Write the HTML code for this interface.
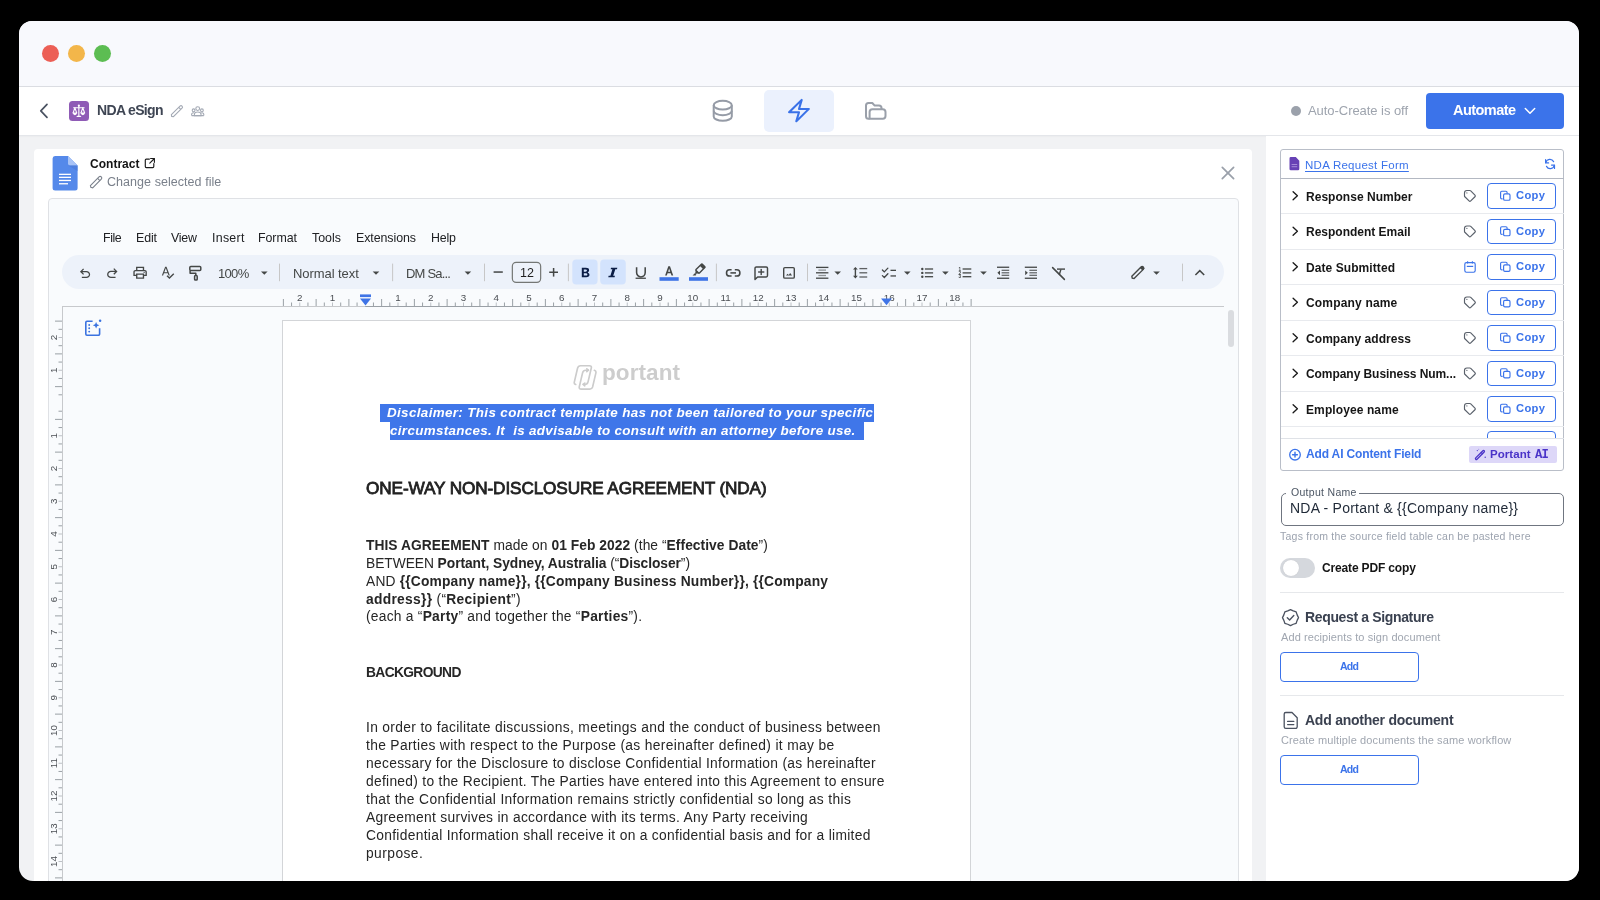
<!DOCTYPE html>
<html><head><meta charset="utf-8"><title>NDA eSign</title>
<style>
html,body{margin:0;padding:0;}
body{width:1600px;height:900px;background:#000;overflow:hidden;position:relative;font-family:"Liberation Sans",sans-serif;}
#win{position:absolute;left:19px;top:21px;width:1560px;height:860px;border-radius:13px 13px 14px 14px;overflow:hidden;background:#f1f2f4;}
#in{position:absolute;left:-19px;top:-21px;width:1600px;height:900px;}
.a{position:absolute;box-sizing:border-box;}
.t{position:absolute;white-space:pre;line-height:1;-webkit-font-smoothing:antialiased;will-change:transform;}
.t b{font-weight:700;}
svg.a{overflow:visible;}
</style></head>
<body>
<div id="win"><div id="in">
<!-- title bar -->
<div class="a" style="left:0;top:0;width:1600px;height:86px;background:#f8f9fd;"></div>
<div class="a" style="left:0;top:86px;width:1600px;height:1px;background:#dcdee3;"></div>
<div class="a" style="left:42px;top:45px;width:17px;height:17px;border-radius:50%;background:#ec5f56;"></div>
<div class="a" style="left:68px;top:45px;width:17px;height:17px;border-radius:50%;background:#f3b64a;"></div>
<div class="a" style="left:94px;top:45px;width:17px;height:17px;border-radius:50%;background:#5cbd52;"></div>
<!-- header -->
<div class="a" style="left:0;top:87px;width:1600px;height:48px;background:#fff;box-shadow:0 1px 2px rgba(0,0,0,0.07);"></div>
<div class="a" style="left:0;top:135px;width:1600px;height:1px;background:#e4e6ea;"></div>
<div class="a" style="left:764px;top:90px;width:70px;height:42px;border-radius:5px;background:#ebf1fd;"></div>
<div class="a" style="left:68.6px;top:100.7px;width:20.5px;height:20.6px;border-radius:3.5px;background:#8f5bb6;"></div>
<div class="a" style="left:1291px;top:106px;width:10px;height:10px;border-radius:50%;background:#9ba1ab;"></div>
<div class="a" style="left:1426px;top:93px;width:138px;height:36px;border-radius:4px;background:#3b73ea;"></div>
<!-- left card -->
<div class="a" style="left:34px;top:149px;width:1218px;height:760px;border-radius:4px;background:#fff;"></div>
<!-- docs frame -->
<div class="a" style="left:48px;top:198px;width:1191px;height:760px;border-radius:4px;border:1px solid #dfe1e5;background:#f9fbfd;"></div>
<div class="a" style="left:62px;top:255px;width:1162px;height:34px;border-radius:17px;background:#edf2fa;"></div>
<div class="a" style="left:62px;top:306px;width:1162px;height:1px;background:#c7c9cc;"></div>
<div class="a" style="left:62px;top:306px;width:1px;height:600px;background:#c7c9cc;"></div>
<!-- page -->
<div class="a" style="left:282px;top:320px;width:689px;height:600px;background:#fff;border:1px solid #d3d5d8;"></div>
<div class="a" style="left:1227.5px;top:310px;width:6.5px;height:37px;border-radius:3.5px;background:#dadce0;"></div>
<!-- selection highlight -->
<div class="a" style="left:379.5px;top:403.6px;width:494.5px;height:18px;background:#3f76e9;"></div>
<div class="a" style="left:389.5px;top:421.5px;width:474.5px;height:18.2px;background:#3f76e9;"></div>
<!-- right panel -->
<div class="a" style="left:1266px;top:136px;width:313px;height:760px;background:#fff;"></div>
<div class="a" style="left:1280px;top:149px;width:284px;height:322px;border:1px solid #b9bec8;border-radius:3px;"></div>
<div class="a" style="left:1281px;top:178px;width:282.5px;height:1px;background:#b3b8c2;"></div>
<div class="a" style="left:1281px;top:213px;width:282.5px;height:1px;background:#e8eaee;"></div>
<div class="a" style="left:1281px;top:248.5px;width:282.5px;height:1px;background:#e8eaee;"></div>
<div class="a" style="left:1281px;top:284px;width:282.5px;height:1px;background:#e8eaee;"></div>
<div class="a" style="left:1281px;top:319.5px;width:282.5px;height:1px;background:#e8eaee;"></div>
<div class="a" style="left:1281px;top:355px;width:282.5px;height:1px;background:#e8eaee;"></div>
<div class="a" style="left:1281px;top:390.5px;width:282.5px;height:1px;background:#e8eaee;"></div>
<div class="a" style="left:1281px;top:426px;width:282.5px;height:1px;background:#e8eaee;"></div>
<div class="a" style="left:1281px;top:438px;width:282.5px;height:1px;background:#dfe2e7;"></div>
<div class="a" style="left:1487px;top:431px;width:69px;height:7px;overflow:hidden;"><div class="a" style="left:0;top:0;width:69px;height:25px;border:1.5px solid #3b73ea;border-radius:4px;"></div></div>
<div class="a" style="left:1469px;top:446px;width:87.5px;height:17px;border-radius:2px;background:#ddd7f8;"></div>
<!-- output name field -->
<div class="a" style="left:1280.5px;top:493px;width:283px;height:33px;border:1.5px solid #6f7580;border-radius:5px;"></div>
<div class="a" style="left:1286px;top:486px;width:73px;height:10px;background:#fff;"></div>
<!-- toggle -->
<div class="a" style="left:1280px;top:558px;width:34.5px;height:20px;border-radius:10px;background:#d5d8dd;"></div>
<div class="a" style="left:1282.5px;top:560px;width:16px;height:16px;border-radius:50%;background:#fff;box-shadow:0 0 1px rgba(0,0,0,0.15);"></div>
<div class="a" style="left:1280px;top:592px;width:284px;height:1px;background:#e6e8eb;"></div>
<div class="a" style="left:1280px;top:652px;width:139px;height:29.5px;border:1.5px solid #3b73ea;border-radius:4px;"></div>
<div class="a" style="left:1280px;top:695px;width:284px;height:1px;background:#e6e8eb;"></div>
<div class="a" style="left:1280px;top:755px;width:139px;height:29.5px;border:1.5px solid #3b73ea;border-radius:4px;"></div>
<div class="a" style="left:1487px;top:183.3px;width:69px;height:25.4px;border:1.5px solid #3b73ea;border-radius:4px;"></div>
<div class="a" style="left:1487px;top:218.8px;width:69px;height:25.4px;border:1.5px solid #3b73ea;border-radius:4px;"></div>
<div class="a" style="left:1487px;top:254.3px;width:69px;height:25.4px;border:1.5px solid #3b73ea;border-radius:4px;"></div>
<div class="a" style="left:1487px;top:289.8px;width:69px;height:25.4px;border:1.5px solid #3b73ea;border-radius:4px;"></div>
<div class="a" style="left:1487px;top:325.3px;width:69px;height:25.4px;border:1.5px solid #3b73ea;border-radius:4px;"></div>
<div class="a" style="left:1487px;top:360.8px;width:69px;height:25.4px;border:1.5px solid #3b73ea;border-radius:4px;"></div>
<div class="a" style="left:1487px;top:396.3px;width:69px;height:25.4px;border:1.5px solid #3b73ea;border-radius:4px;"></div>
<svg class="a" style="left:0;top:0;will-change:transform" width="1600" height="900" viewBox="0 0 1600 900">
<polyline points="47,104.3 40.8,110.8 47,117.3" fill="none" stroke="#4a5261" stroke-width="1.7" stroke-linecap="round" stroke-linejoin="round"/>
<g fill="none" stroke="#fff" stroke-width="1.15" stroke-linecap="round"><line x1="78.85" y1="106" x2="78.85" y2="116.2"/><line x1="73.6" y1="107.7" x2="84.1" y2="107.7"/><path d="M74.9 107.9 L73.1 112.9 M74.9 107.9 L76.7 112.9"/><path d="M82.8 107.9 L81 112.9 M82.8 107.9 L84.6 112.9"/></g><g fill="#fff"><path d="M72.6 112.6 H77.2 Q76.6 115.2 74.9 115.2 Q73.2 115.2 72.6 112.6 Z"/><path d="M80.5 112.6 H85.1 Q84.5 115.2 82.8 115.2 Q81.1 115.2 80.5 112.6 Z"/><path d="M76.3 117 H81.4 L80.6 115.8 H77.1 Z"/><circle cx="78.85" cy="105.6" r="1.1"/></g>
<g transform="translate(177.2,110.9) rotate(-45)" fill="none" stroke="#a3a9b4" stroke-width="1.1"><path d="M-6.8 -1.45 H5.4 A1.45 1.45 0 0 1 5.4 1.45 H-6.8 L-7.8 0 Z"/><line x1="3.6" y1="-1.45" x2="3.6" y2="1.45"/></g>
<g fill="none" stroke="#a3a9b4" stroke-width="1.1"><circle cx="197.7" cy="108.6" r="1.9"/><circle cx="193.6" cy="110.3" r="1.4"/><circle cx="201.9" cy="110.3" r="1.4"/><path d="M194.4 115.6 v-1 a3.3 2.6 0 0 1 6.6 0 v1 z"/><path d="M191.6 115.6 v-1.2 a1.8 1.6 0 0 1 2.8 -1.3 M203.8 115.6 v-1.2 a1.8 1.6 0 0 0 -2.8 -1.3 M191.6 115.6 h12.2"/></g>
<g fill="none" stroke="#959ba6" stroke-width="2"><ellipse cx="722.75" cy="105.15" rx="9.05" ry="4.35"/><path d="M713.7 105.15 V116.45 A9.05 4.35 0 0 0 731.8 116.45 V105.15"/><path d="M713.7 110.85 A9.05 4.35 0 0 0 731.8 110.85"/></g>
<g transform="translate(784.6,97.4) scale(1.2,1.1)" fill="none" stroke="#3a72e8" stroke-width="1.75" stroke-linejoin="round" stroke-linecap="round"><path d="m3.75 13.5 10.5-11.25L12 10.5h8.25L9.75 21.75 12 13.5H3.75Z"/></g>
<g transform="translate(855,95)" fill="none" stroke="#9aa0aa" stroke-width="2" stroke-linejoin="round"><path d="M14.6 23.7 H13.5 a2.5 2.5 0 0 1 -2.5 -2.5 V10.5 a2.5 2.5 0 0 1 2.5 -2.5 H17.3 l2.4 2.6 H24 a2.5 2.5 0 0 1 2.5 2.5 V14.2"/><path d="M14.6 23.7 V17 a2.8 2.8 0 0 1 2.8 -2.8 H27.7 a2.8 2.8 0 0 1 2.8 2.8 V21 a2.7 2.7 0 0 1 -2.7 2.7 Z"/></g>
<polyline points="1525.3,108.5 1530,113.2 1534.7,108.5" fill="none" stroke="#fff" stroke-width="1.5" stroke-linecap="round" stroke-linejoin="round"/>
<path d="M55 156 H68 L77.6 165.6 V188.1 A2.5 2.5 0 0 1 75.1 190.6 H55.1 A2.5 2.5 0 0 1 52.6 188.1 V158.5 A2.5 2.5 0 0 1 55 156 Z" fill="#5589ea"/><path d="M68 156 L77.6 165.6 H70 A2 2 0 0 1 68 163.6 Z" fill="#a8c3f6"/><path d="M68.3 165.6 H77.6 V171 Z" fill="#4a78d6" opacity="0.6"/><g fill="#fff"><rect x="59" y="173.7" width="12" height="1.3"/><rect x="59" y="176.7" width="12" height="1.3"/><rect x="59" y="179.8" width="12" height="1.3"/><rect x="59" y="183.1" width="9" height="1.3"/></g>
<g fill="none" stroke="#1c1c1c" stroke-width="1.15" stroke-linecap="round" stroke-linejoin="round"><path d="M149.4 159.1 H146.3 A1 1 0 0 0 145.3 160.1 V166.6 A1 1 0 0 0 146.3 167.6 H152.8 A1 1 0 0 0 153.8 166.6 V163.6"/><path d="M150.6 158.5 H154.4 V162.3 M154.4 158.5 L149.8 163.1"/></g>
<g transform="translate(96.2,182) rotate(-45)" fill="none" stroke="#7a808b" stroke-width="1.1"><path d="M-6.6 -1.6 H5.6 A1.6 1.6 0 0 1 5.6 1.6 H-6.6 L-7.6 0 Z"/><line x1="3.6" y1="-1.6" x2="3.6" y2="1.6"/></g>
<g stroke="#9aa0aa" stroke-width="1.7" stroke-linecap="round"><line x1="1222.3" y1="167.4" x2="1233.6" y2="178.7"/><line x1="1233.6" y1="167.4" x2="1222.3" y2="178.7"/></g>
<g transform="translate(77.4,281.2) scale(0.01594)" fill="#444746"><path d="M280-200v-80h284q63 0 109.5-40T720-420q0-60-46.5-100T564-560H312l104 104-56 56-200-200 200-200 56 56-104 104h252q97 0 166.5 63T800-420q0 94-69.5 157T564-200H280Z"/></g>
<g transform="translate(104.5,281.20000000000005) scale(0.01625)" fill="#444746"><path d="M396-200q-97 0-166.5-63T160-420q0-94 69.5-157T396-640h252L544-744l56-56 200 200-200 200-56-56 104-104H396q-63 0-109.5 40T240-420q0 60 46.5 100T396-280h284v80H396Z"/></g>
<g transform="translate(132.0,280.8) scale(0.01687)" fill="#444746"><path d="M640-640v-120H320v120h-80v-200h480v200h-80Zm-480 80h640-640Zm560 100q17 0 28.5-11.5T760-500q0-17-11.5-28.5T720-540q-17 0-28.5 11.5T680-500q0 17 11.5 28.5T720-460Zm-80 260v-160H320v160h320Zm80 80H240v-160H80v-240q0-51 35-85.5t85-34.5h560q51 0 85.5 34.5T880-520v240H720v160Zm80-240v-160q0-17-11.5-28.5T760-560H200q-17 0-28.5 11.5T160-520v160h80v-80h480v80h80Z"/></g>
<g transform="translate(159.8,280.4) scale(0.01708)" fill="#444746"><path d="M564-80 394-250l56-56 114 114 226-226 56 56L564-80ZM120-280l194-520h79l194 520h-75l-46-132H242l-47 132h-75Zm145-195h174l-84-240h-6l-84 240Z"/></g>
<g fill="none" stroke="#444746" stroke-width="1.5" stroke-linejoin="round"><rect x="189.8" y="266.6" width="11" height="3.9" rx="1"/><path d="M190.1 270.5 V273.2 H195.8 V275.6"/><rect x="194.6" y="275.6" width="2.6" height="4.5" rx="0.8"/></g>
<path d="M261 271.4 h6.6 l-3.3 3.4 z" fill="#444746"/>
<path d="M372.7 271.4 h6.6 l-3.3 3.4 z" fill="#444746"/>
<path d="M464.6 271.4 h6.6 l-3.3 3.4 z" fill="#444746"/>
<path d="M834.4 271.4 h6.6 l-3.3 3.4 z" fill="#444746"/>
<path d="M904.0 271.4 h6.6 l-3.3 3.4 z" fill="#444746"/>
<path d="M942.1 271.4 h6.6 l-3.3 3.4 z" fill="#444746"/>
<path d="M980.2 271.4 h6.6 l-3.3 3.4 z" fill="#444746"/>
<path d="M1153.2 271.4 h6.6 l-3.3 3.4 z" fill="#444746"/>
<rect x="279.0" y="263.6" width="1" height="17.6" fill="#c7c7c7"/>
<rect x="392.1" y="263.6" width="1" height="17.6" fill="#c7c7c7"/>
<rect x="484.0" y="263.6" width="1" height="17.6" fill="#c7c7c7"/>
<rect x="567.9" y="263.6" width="1" height="17.6" fill="#c7c7c7"/>
<rect x="715.9" y="263.6" width="1" height="17.6" fill="#c7c7c7"/>
<rect x="807.0" y="263.6" width="1" height="17.6" fill="#c7c7c7"/>
<rect x="1182.0" y="263.6" width="1" height="17.6" fill="#c7c7c7"/>
<rect x="493.6" y="271.3" width="9.2" height="1.5" fill="#444746"/>
<rect x="512.35" y="262.35" width="28.3" height="20" rx="3.8" fill="none" stroke="#747775" stroke-width="1.2"/>
<rect x="549.2" y="271.5" width="8.8" height="1.5" fill="#444746"/><rect x="552.85" y="268" width="1.5" height="8.6" fill="#444746"/>
<rect x="572.3" y="259.4" width="25.3" height="25.1" rx="4" fill="#d3e3fd"/><rect x="600.2" y="259.4" width="25.6" height="25.1" rx="4" fill="#d3e3fd"/>
<path d="M581.8 267.8 H585.9 Q589.1 267.8 589.1 270.2 Q589.1 271.8 587.7 272.4 Q589.5 273 589.5 274.8 Q589.5 277.2 586.2 277.2 H581.8 Z M583.8 269.4 V271.7 H585.6 Q587 271.7 587 270.55 Q587 269.4 585.6 269.4 Z M583.8 273.2 V275.6 H585.9 Q587.4 275.6 587.4 274.4 Q587.4 273.2 585.9 273.2 Z" fill="#0b1d46" fill-rule="evenodd"/>
<path d="M611 267.8 H617.3 L617 269.3 H615.3 L613.2 275.7 H614.9 L614.6 277.2 H608.3 L608.6 275.7 H610.4 L612.4 269.3 H610.7 Z" fill="#0b1d46"/>
<path d="M636.6 267.2 V272.6 A4.3 4.3 0 0 0 645.2 272.6 V267.2" fill="none" stroke="#444746" stroke-width="1.55"/><rect x="635.6" y="277.6" width="10.3" height="1.3" fill="#444746"/>
<path d="M665.1 275.6 L668.3 266.2 H670 L673.2 275.6 H671.5 L670.7 273.2 H667.6 L666.8 275.6 Z M668.1 271.7 H670.2 L669.15 268.5 Z" fill="#444746" fill-rule="evenodd"/>
<rect x="659.5" y="277.2" width="19.2" height="3.6" fill="#3f74e6"/>
<g transform="translate(699,270) rotate(45)"><rect x="-2.4" y="-6.4" width="4.8" height="8.8" rx="0.6" fill="none" stroke="#444746" stroke-width="1.4"/><rect x="-2.4" y="-6.8" width="4.8" height="3.2" fill="#444746"/><path d="M-2.2 2.4 h4.4 l-2.2 3.2 z" fill="#444746"/></g><path d="M692.6 275.6 l2.2 -2.4 l1.6 1.6 l-0.8 0.8 z" fill="#444746"/>
<rect x="689" y="277.2" width="19" height="3.6" fill="#3f74e6"/>
<g fill="none" stroke="#444746" stroke-width="1.55"><path d="M731.6 269.8 H729.6 A3.1 3.1 0 0 0 729.6 276 H731.6"/><path d="M734.8 269.8 H736.8 A3.1 3.1 0 0 1 736.8 276 H734.8"/><line x1="730.4" y1="272.9" x2="736" y2="272.9"/></g>
<path d="M755 279.4 V268.2 A1.3 1.3 0 0 1 756.3 266.9 H766.2 A1.3 1.3 0 0 1 767.5 268.2 V275.6 A1.3 1.3 0 0 1 766.2 276.9 H757.6 Z" fill="none" stroke="#444746" stroke-width="1.45" stroke-linejoin="round"/><rect x="760.5" y="268.9" width="1.4" height="6.2" fill="#444746"/><rect x="758.1" y="271.3" width="6.2" height="1.4" fill="#444746"/>
<rect x="783.7" y="267.6" width="10.6" height="10.5" rx="1.2" fill="none" stroke="#444746" stroke-width="1.4"/><path d="M786 275.6 l1.6 -1.8 l1.1 1.1 l1.5 -2 l1.9 2.7 z" fill="#444746"/>
<rect x="816" y="266.75" width="12.399999999999977" height="1.3" fill="#444746" opacity="1"/>
<rect x="818.4" y="269.45000000000005" width="7.600000000000023" height="1.3" fill="#444746" opacity="0.55"/>
<rect x="816" y="272.15000000000003" width="12.399999999999977" height="1.3" fill="#444746" opacity="1"/>
<rect x="818.4" y="274.85" width="7.600000000000023" height="1.3" fill="#444746" opacity="0.55"/>
<rect x="816" y="277.55" width="12.399999999999977" height="1.3" fill="#444746" opacity="1"/>
<path d="M855.4 267 l-2.4 2.6 h1.7 v6.2 h-1.7 l2.4 2.6 l2.4 -2.6 h-1.7 v-6.2 h1.7 z" fill="#444746"/>
<rect x="859.4" y="267.95000000000005" width="7.8" height="1.3" fill="#444746" opacity="0.85"/>
<rect x="859.4" y="272.15000000000003" width="7.8" height="1.3" fill="#444746" opacity="0.85"/>
<rect x="859.4" y="276.35" width="7.8" height="1.3" fill="#444746" opacity="0.85"/>
<g fill="none" stroke="#444746" stroke-width="1.3" stroke-linecap="round"><path d="M882.4 270 l1.9 1.9 l3.6 -3.8"/><path d="M882.4 275.6 l1.9 1.9 l3.6 -3.8"/></g><rect x="890.5" y="269.7" width="5.5" height="1.3" fill="#444746"/><rect x="890.5" y="275.3" width="5.5" height="1.3" fill="#444746"/>
<circle cx="922.3" cy="269.0" r="1.2" fill="#444746"/><rect x="924.9" y="268.35" width="8.2" height="1.3" fill="#444746"/>
<circle cx="922.3" cy="272.9" r="1.2" fill="#444746"/><rect x="924.9" y="272.25" width="8.2" height="1.3" fill="#444746"/>
<circle cx="922.3" cy="276.7" r="1.2" fill="#444746"/><rect x="924.9" y="276.05" width="8.2" height="1.3" fill="#444746"/>
<rect x="962.6" y="268.35" width="8.7" height="1.3" fill="#444746"/>
<rect x="962.6" y="272.25" width="8.7" height="1.3" fill="#444746"/>
<rect x="962.6" y="276.05" width="8.7" height="1.3" fill="#444746"/>
<g font-family="Liberation Sans" font-weight="700" font-size="4.6" fill="#444746"><text x="958.6" y="270.8">1</text><text x="958.5" y="274.6">2</text><text x="958.5" y="278.4">3</text></g>
<rect x="997" y="266.6" width="12.2" height="1.3" fill="#444746"/><rect x="997" y="277.6" width="12.2" height="1.3" fill="#444746"/>
<rect x="1001.6" y="269.7" width="7.6" height="1.2" fill="#444746" opacity="0.85"/>
<rect x="1001.6" y="272.2" width="7.6" height="1.2" fill="#444746" opacity="0.85"/>
<rect x="1001.6" y="274.7" width="7.6" height="1.2" fill="#444746" opacity="0.85"/>
<path d="M1000 270.4 v4.8 l-2.6 -2.4 z" fill="#444746"/>
<rect x="1024.8" y="266.6" width="12.2" height="1.3" fill="#444746"/><rect x="1024.8" y="277.6" width="12.2" height="1.3" fill="#444746"/>
<rect x="1029.3999999999999" y="269.7" width="7.6" height="1.2" fill="#444746" opacity="0.85"/>
<rect x="1029.3999999999999" y="272.2" width="7.6" height="1.2" fill="#444746" opacity="0.85"/>
<rect x="1029.3999999999999" y="274.7" width="7.6" height="1.2" fill="#444746" opacity="0.85"/>
<path d="M1025.2 270.4 v4.8 l2.6 -2.4 z" fill="#444746"/>
<g stroke="#444746" stroke-width="1.5" stroke-linecap="round"><line x1="1052.6" y1="267.6" x2="1064.4" y2="279.4"/></g><rect x="1057" y="268.4" width="8" height="1.4" fill="#444746"/><path d="M1060.2 269.6 l-1.6 4.6 l1.2 1.2 l1.8 -5.8 z" fill="#444746"/>
<g transform="translate(1138.2,272.2) rotate(-45)"><path d="M-7.4 -1.6 H5.6 A1.6 1.6 0 0 1 5.6 1.6 H-7.4 L-8.4 0 Z" fill="none" stroke="#444746" stroke-width="1.4"/><rect x="4.2" y="-1.9" width="2.8" height="3.8" fill="#444746"/></g>
<polyline points="1195.4,275 1199.8,270.6 1204.2,275" fill="none" stroke="#444746" stroke-width="1.5"/>
<g fill="none" stroke="#3b73e0" stroke-width="1.6"><path d="M92.6 321.3 H87 A1.2 1.2 0 0 0 85.8 322.5 V334.1 A1.2 1.2 0 0 0 87 335.3 H98.4 A1.2 1.2 0 0 0 99.6 334.1 V328.3"/></g><g fill="#3b73e0"><circle cx="89.2" cy="325.0" r="0.95"/><circle cx="89.2" cy="328.3" r="0.95"/><circle cx="89.2" cy="331.6" r="0.95"/><path d="M96.1 321.9 l1.0 2.3 l2.3 1.0 l-2.3 1.0 l-1.0 2.3 l-1.0 -2.3 l-2.3 -1.0 l2.3 -1.0 z"/><circle cx="100.1" cy="320.7" r="1.25"/></g>
</svg><svg class="a" style="left:0;top:0;will-change:transform" width="1600" height="900" viewBox="0 0 1600 900">
<rect x="282.88" y="299" width="1" height="7" fill="#9aa0a6"/><rect x="291.06" y="302.5" width="1" height="3.5" fill="#9aa0a6"/><rect x="299.25" y="302.5" width="1" height="3.5" fill="#bdc1c6"/><rect x="307.44" y="302.5" width="1" height="3.5" fill="#9aa0a6"/><rect x="315.62" y="299" width="1" height="7" fill="#9aa0a6"/><rect x="323.81" y="302.5" width="1" height="3.5" fill="#9aa0a6"/><rect x="332.00" y="302.5" width="1" height="3.5" fill="#bdc1c6"/><rect x="340.19" y="302.5" width="1" height="3.5" fill="#9aa0a6"/><rect x="348.38" y="299" width="1" height="7" fill="#9aa0a6"/><rect x="356.56" y="302.5" width="1" height="3.5" fill="#9aa0a6"/><rect x="372.94" y="302.5" width="1" height="3.5" fill="#9aa0a6"/><rect x="381.12" y="299" width="1" height="7" fill="#9aa0a6"/><rect x="389.31" y="302.5" width="1" height="3.5" fill="#9aa0a6"/><rect x="397.50" y="302.5" width="1" height="3.5" fill="#bdc1c6"/><rect x="405.69" y="302.5" width="1" height="3.5" fill="#9aa0a6"/><rect x="413.88" y="299" width="1" height="7" fill="#9aa0a6"/><rect x="422.06" y="302.5" width="1" height="3.5" fill="#9aa0a6"/><rect x="430.25" y="302.5" width="1" height="3.5" fill="#bdc1c6"/><rect x="438.44" y="302.5" width="1" height="3.5" fill="#9aa0a6"/><rect x="446.62" y="299" width="1" height="7" fill="#9aa0a6"/><rect x="454.81" y="302.5" width="1" height="3.5" fill="#9aa0a6"/><rect x="463.00" y="302.5" width="1" height="3.5" fill="#bdc1c6"/><rect x="471.19" y="302.5" width="1" height="3.5" fill="#9aa0a6"/><rect x="479.38" y="299" width="1" height="7" fill="#9aa0a6"/><rect x="487.56" y="302.5" width="1" height="3.5" fill="#9aa0a6"/><rect x="495.75" y="302.5" width="1" height="3.5" fill="#bdc1c6"/><rect x="503.94" y="302.5" width="1" height="3.5" fill="#9aa0a6"/><rect x="512.12" y="299" width="1" height="7" fill="#9aa0a6"/><rect x="520.31" y="302.5" width="1" height="3.5" fill="#9aa0a6"/><rect x="528.50" y="302.5" width="1" height="3.5" fill="#bdc1c6"/><rect x="536.69" y="302.5" width="1" height="3.5" fill="#9aa0a6"/><rect x="544.88" y="299" width="1" height="7" fill="#9aa0a6"/><rect x="553.06" y="302.5" width="1" height="3.5" fill="#9aa0a6"/><rect x="561.25" y="302.5" width="1" height="3.5" fill="#bdc1c6"/><rect x="569.44" y="302.5" width="1" height="3.5" fill="#9aa0a6"/><rect x="577.62" y="299" width="1" height="7" fill="#9aa0a6"/><rect x="585.81" y="302.5" width="1" height="3.5" fill="#9aa0a6"/><rect x="594.00" y="302.5" width="1" height="3.5" fill="#bdc1c6"/><rect x="602.19" y="302.5" width="1" height="3.5" fill="#9aa0a6"/><rect x="610.38" y="299" width="1" height="7" fill="#9aa0a6"/><rect x="618.56" y="302.5" width="1" height="3.5" fill="#9aa0a6"/><rect x="626.75" y="302.5" width="1" height="3.5" fill="#bdc1c6"/><rect x="634.94" y="302.5" width="1" height="3.5" fill="#9aa0a6"/><rect x="643.12" y="299" width="1" height="7" fill="#9aa0a6"/><rect x="651.31" y="302.5" width="1" height="3.5" fill="#9aa0a6"/><rect x="659.50" y="302.5" width="1" height="3.5" fill="#bdc1c6"/><rect x="667.69" y="302.5" width="1" height="3.5" fill="#9aa0a6"/><rect x="675.88" y="299" width="1" height="7" fill="#9aa0a6"/><rect x="684.06" y="302.5" width="1" height="3.5" fill="#9aa0a6"/><rect x="692.25" y="302.5" width="1" height="3.5" fill="#bdc1c6"/><rect x="700.44" y="302.5" width="1" height="3.5" fill="#9aa0a6"/><rect x="708.62" y="299" width="1" height="7" fill="#9aa0a6"/><rect x="716.81" y="302.5" width="1" height="3.5" fill="#9aa0a6"/><rect x="725.00" y="302.5" width="1" height="3.5" fill="#bdc1c6"/><rect x="733.19" y="302.5" width="1" height="3.5" fill="#9aa0a6"/><rect x="741.38" y="299" width="1" height="7" fill="#9aa0a6"/><rect x="749.56" y="302.5" width="1" height="3.5" fill="#9aa0a6"/><rect x="757.75" y="302.5" width="1" height="3.5" fill="#bdc1c6"/><rect x="765.94" y="302.5" width="1" height="3.5" fill="#9aa0a6"/><rect x="774.12" y="299" width="1" height="7" fill="#9aa0a6"/><rect x="782.31" y="302.5" width="1" height="3.5" fill="#9aa0a6"/><rect x="790.50" y="302.5" width="1" height="3.5" fill="#bdc1c6"/><rect x="798.69" y="302.5" width="1" height="3.5" fill="#9aa0a6"/><rect x="806.88" y="299" width="1" height="7" fill="#9aa0a6"/><rect x="815.06" y="302.5" width="1" height="3.5" fill="#9aa0a6"/><rect x="823.25" y="302.5" width="1" height="3.5" fill="#bdc1c6"/><rect x="831.44" y="302.5" width="1" height="3.5" fill="#9aa0a6"/><rect x="839.62" y="299" width="1" height="7" fill="#9aa0a6"/><rect x="847.81" y="302.5" width="1" height="3.5" fill="#9aa0a6"/><rect x="856.00" y="302.5" width="1" height="3.5" fill="#bdc1c6"/><rect x="864.19" y="302.5" width="1" height="3.5" fill="#9aa0a6"/><rect x="872.38" y="299" width="1" height="7" fill="#9aa0a6"/><rect x="880.56" y="302.5" width="1" height="3.5" fill="#9aa0a6"/><rect x="888.75" y="302.5" width="1" height="3.5" fill="#bdc1c6"/><rect x="896.94" y="302.5" width="1" height="3.5" fill="#9aa0a6"/><rect x="905.12" y="299" width="1" height="7" fill="#9aa0a6"/><rect x="913.31" y="302.5" width="1" height="3.5" fill="#9aa0a6"/><rect x="921.50" y="302.5" width="1" height="3.5" fill="#bdc1c6"/><rect x="929.69" y="302.5" width="1" height="3.5" fill="#9aa0a6"/><rect x="937.88" y="299" width="1" height="7" fill="#9aa0a6"/><rect x="946.06" y="302.5" width="1" height="3.5" fill="#9aa0a6"/><rect x="954.25" y="302.5" width="1" height="3.5" fill="#bdc1c6"/><rect x="962.44" y="302.5" width="1" height="3.5" fill="#9aa0a6"/><rect x="970.62" y="299" width="1" height="7" fill="#9aa0a6"/>
<text x="299.75" y="300.6" text-anchor="middle" font-family="Liberation Sans" font-size="9.8" fill="#4a4e53">2</text><text x="332.50" y="300.6" text-anchor="middle" font-family="Liberation Sans" font-size="9.8" fill="#4a4e53">1</text><text x="398.00" y="300.6" text-anchor="middle" font-family="Liberation Sans" font-size="9.8" fill="#4a4e53">1</text><text x="430.75" y="300.6" text-anchor="middle" font-family="Liberation Sans" font-size="9.8" fill="#4a4e53">2</text><text x="463.50" y="300.6" text-anchor="middle" font-family="Liberation Sans" font-size="9.8" fill="#4a4e53">3</text><text x="496.25" y="300.6" text-anchor="middle" font-family="Liberation Sans" font-size="9.8" fill="#4a4e53">4</text><text x="529.00" y="300.6" text-anchor="middle" font-family="Liberation Sans" font-size="9.8" fill="#4a4e53">5</text><text x="561.75" y="300.6" text-anchor="middle" font-family="Liberation Sans" font-size="9.8" fill="#4a4e53">6</text><text x="594.50" y="300.6" text-anchor="middle" font-family="Liberation Sans" font-size="9.8" fill="#4a4e53">7</text><text x="627.25" y="300.6" text-anchor="middle" font-family="Liberation Sans" font-size="9.8" fill="#4a4e53">8</text><text x="660.00" y="300.6" text-anchor="middle" font-family="Liberation Sans" font-size="9.8" fill="#4a4e53">9</text><text x="692.75" y="300.6" text-anchor="middle" font-family="Liberation Sans" font-size="9.8" fill="#4a4e53">10</text><text x="725.50" y="300.6" text-anchor="middle" font-family="Liberation Sans" font-size="9.8" fill="#4a4e53">11</text><text x="758.25" y="300.6" text-anchor="middle" font-family="Liberation Sans" font-size="9.8" fill="#4a4e53">12</text><text x="791.00" y="300.6" text-anchor="middle" font-family="Liberation Sans" font-size="9.8" fill="#4a4e53">13</text><text x="823.75" y="300.6" text-anchor="middle" font-family="Liberation Sans" font-size="9.8" fill="#4a4e53">14</text><text x="856.50" y="300.6" text-anchor="middle" font-family="Liberation Sans" font-size="9.8" fill="#4a4e53">15</text><text x="889.25" y="300.6" text-anchor="middle" font-family="Liberation Sans" font-size="9.8" fill="#4a4e53">16</text><text x="922.00" y="300.6" text-anchor="middle" font-family="Liberation Sans" font-size="9.8" fill="#4a4e53">17</text><text x="954.75" y="300.6" text-anchor="middle" font-family="Liberation Sans" font-size="9.8" fill="#4a4e53">18</text>
<rect x="365.25" y="306" width="521.25" height="1" fill="#9aa0a6"/>
<rect x="360" y="294.4" width="11" height="2.7" fill="#3f74e6"/><path d="M360 298.4 h11 l-5.5 7 z" fill="#3f74e6"/>
<path d="M881 298.6 h11 l-5.5 6.6 z" fill="#3f74e6"/>
<rect x="55" y="320.62" width="7" height="1" fill="#9aa0a6"/><rect x="58.5" y="328.81" width="3.5" height="1" fill="#9aa0a6"/><rect x="58.5" y="337.00" width="3.5" height="1" fill="#bdc1c6"/><rect x="58.5" y="345.19" width="3.5" height="1" fill="#9aa0a6"/><rect x="55" y="353.38" width="7" height="1" fill="#9aa0a6"/><rect x="58.5" y="361.56" width="3.5" height="1" fill="#9aa0a6"/><rect x="58.5" y="369.75" width="3.5" height="1" fill="#bdc1c6"/><rect x="58.5" y="377.94" width="3.5" height="1" fill="#9aa0a6"/><rect x="55" y="386.12" width="7" height="1" fill="#9aa0a6"/><rect x="58.5" y="394.31" width="3.5" height="1" fill="#9aa0a6"/><rect x="58.5" y="410.69" width="3.5" height="1" fill="#9aa0a6"/><rect x="55" y="418.88" width="7" height="1" fill="#9aa0a6"/><rect x="58.5" y="427.06" width="3.5" height="1" fill="#9aa0a6"/><rect x="58.5" y="435.25" width="3.5" height="1" fill="#bdc1c6"/><rect x="58.5" y="443.44" width="3.5" height="1" fill="#9aa0a6"/><rect x="55" y="451.62" width="7" height="1" fill="#9aa0a6"/><rect x="58.5" y="459.81" width="3.5" height="1" fill="#9aa0a6"/><rect x="58.5" y="468.00" width="3.5" height="1" fill="#bdc1c6"/><rect x="58.5" y="476.19" width="3.5" height="1" fill="#9aa0a6"/><rect x="55" y="484.38" width="7" height="1" fill="#9aa0a6"/><rect x="58.5" y="492.56" width="3.5" height="1" fill="#9aa0a6"/><rect x="58.5" y="500.75" width="3.5" height="1" fill="#bdc1c6"/><rect x="58.5" y="508.94" width="3.5" height="1" fill="#9aa0a6"/><rect x="55" y="517.12" width="7" height="1" fill="#9aa0a6"/><rect x="58.5" y="525.31" width="3.5" height="1" fill="#9aa0a6"/><rect x="58.5" y="533.50" width="3.5" height="1" fill="#bdc1c6"/><rect x="58.5" y="541.69" width="3.5" height="1" fill="#9aa0a6"/><rect x="55" y="549.88" width="7" height="1" fill="#9aa0a6"/><rect x="58.5" y="558.06" width="3.5" height="1" fill="#9aa0a6"/><rect x="58.5" y="566.25" width="3.5" height="1" fill="#bdc1c6"/><rect x="58.5" y="574.44" width="3.5" height="1" fill="#9aa0a6"/><rect x="55" y="582.62" width="7" height="1" fill="#9aa0a6"/><rect x="58.5" y="590.81" width="3.5" height="1" fill="#9aa0a6"/><rect x="58.5" y="599.00" width="3.5" height="1" fill="#bdc1c6"/><rect x="58.5" y="607.19" width="3.5" height="1" fill="#9aa0a6"/><rect x="55" y="615.38" width="7" height="1" fill="#9aa0a6"/><rect x="58.5" y="623.56" width="3.5" height="1" fill="#9aa0a6"/><rect x="58.5" y="631.75" width="3.5" height="1" fill="#bdc1c6"/><rect x="58.5" y="639.94" width="3.5" height="1" fill="#9aa0a6"/><rect x="55" y="648.12" width="7" height="1" fill="#9aa0a6"/><rect x="58.5" y="656.31" width="3.5" height="1" fill="#9aa0a6"/><rect x="58.5" y="664.50" width="3.5" height="1" fill="#bdc1c6"/><rect x="58.5" y="672.69" width="3.5" height="1" fill="#9aa0a6"/><rect x="55" y="680.88" width="7" height="1" fill="#9aa0a6"/><rect x="58.5" y="689.06" width="3.5" height="1" fill="#9aa0a6"/><rect x="58.5" y="697.25" width="3.5" height="1" fill="#bdc1c6"/><rect x="58.5" y="705.44" width="3.5" height="1" fill="#9aa0a6"/><rect x="55" y="713.62" width="7" height="1" fill="#9aa0a6"/><rect x="58.5" y="721.81" width="3.5" height="1" fill="#9aa0a6"/><rect x="58.5" y="730.00" width="3.5" height="1" fill="#bdc1c6"/><rect x="58.5" y="738.19" width="3.5" height="1" fill="#9aa0a6"/><rect x="55" y="746.38" width="7" height="1" fill="#9aa0a6"/><rect x="58.5" y="754.56" width="3.5" height="1" fill="#9aa0a6"/><rect x="58.5" y="762.75" width="3.5" height="1" fill="#bdc1c6"/><rect x="58.5" y="770.94" width="3.5" height="1" fill="#9aa0a6"/><rect x="55" y="779.12" width="7" height="1" fill="#9aa0a6"/><rect x="58.5" y="787.31" width="3.5" height="1" fill="#9aa0a6"/><rect x="58.5" y="795.50" width="3.5" height="1" fill="#bdc1c6"/><rect x="58.5" y="803.69" width="3.5" height="1" fill="#9aa0a6"/><rect x="55" y="811.88" width="7" height="1" fill="#9aa0a6"/><rect x="58.5" y="820.06" width="3.5" height="1" fill="#9aa0a6"/><rect x="58.5" y="828.25" width="3.5" height="1" fill="#bdc1c6"/><rect x="58.5" y="836.44" width="3.5" height="1" fill="#9aa0a6"/><rect x="55" y="844.62" width="7" height="1" fill="#9aa0a6"/><rect x="58.5" y="852.81" width="3.5" height="1" fill="#9aa0a6"/><rect x="58.5" y="861.00" width="3.5" height="1" fill="#bdc1c6"/><rect x="58.5" y="869.19" width="3.5" height="1" fill="#9aa0a6"/><rect x="55" y="877.38" width="7" height="1" fill="#9aa0a6"/><rect x="58.5" y="885.56" width="3.5" height="1" fill="#9aa0a6"/>
<text x="0" y="0" transform="translate(57.4,337.50) rotate(-90)" text-anchor="middle" font-family="Liberation Sans" font-size="9.8" fill="#4a4e53">2</text><text x="0" y="0" transform="translate(57.4,370.25) rotate(-90)" text-anchor="middle" font-family="Liberation Sans" font-size="9.8" fill="#4a4e53">1</text><text x="0" y="0" transform="translate(57.4,435.75) rotate(-90)" text-anchor="middle" font-family="Liberation Sans" font-size="9.8" fill="#4a4e53">1</text><text x="0" y="0" transform="translate(57.4,468.50) rotate(-90)" text-anchor="middle" font-family="Liberation Sans" font-size="9.8" fill="#4a4e53">2</text><text x="0" y="0" transform="translate(57.4,501.25) rotate(-90)" text-anchor="middle" font-family="Liberation Sans" font-size="9.8" fill="#4a4e53">3</text><text x="0" y="0" transform="translate(57.4,534.00) rotate(-90)" text-anchor="middle" font-family="Liberation Sans" font-size="9.8" fill="#4a4e53">4</text><text x="0" y="0" transform="translate(57.4,566.75) rotate(-90)" text-anchor="middle" font-family="Liberation Sans" font-size="9.8" fill="#4a4e53">5</text><text x="0" y="0" transform="translate(57.4,599.50) rotate(-90)" text-anchor="middle" font-family="Liberation Sans" font-size="9.8" fill="#4a4e53">6</text><text x="0" y="0" transform="translate(57.4,632.25) rotate(-90)" text-anchor="middle" font-family="Liberation Sans" font-size="9.8" fill="#4a4e53">7</text><text x="0" y="0" transform="translate(57.4,665.00) rotate(-90)" text-anchor="middle" font-family="Liberation Sans" font-size="9.8" fill="#4a4e53">8</text><text x="0" y="0" transform="translate(57.4,697.75) rotate(-90)" text-anchor="middle" font-family="Liberation Sans" font-size="9.8" fill="#4a4e53">9</text><text x="0" y="0" transform="translate(57.4,730.50) rotate(-90)" text-anchor="middle" font-family="Liberation Sans" font-size="9.8" fill="#4a4e53">10</text><text x="0" y="0" transform="translate(57.4,763.25) rotate(-90)" text-anchor="middle" font-family="Liberation Sans" font-size="9.8" fill="#4a4e53">11</text><text x="0" y="0" transform="translate(57.4,796.00) rotate(-90)" text-anchor="middle" font-family="Liberation Sans" font-size="9.8" fill="#4a4e53">12</text><text x="0" y="0" transform="translate(57.4,828.75) rotate(-90)" text-anchor="middle" font-family="Liberation Sans" font-size="9.8" fill="#4a4e53">13</text><text x="0" y="0" transform="translate(57.4,861.50) rotate(-90)" text-anchor="middle" font-family="Liberation Sans" font-size="9.8" fill="#4a4e53">14</text>
<g fill="none" stroke="#cccccc" stroke-width="1.65" stroke-linecap="round" stroke-linejoin="round"><path d="M575.7 384.5 Q573.9 384.1 574.3 382.2 L577.6 368 Q578.2 365.7 580.5 365.7 H589.4 Q591.8 365.7 591.3 368 L588.1 381.6 Q587.5 384.4 584.8 384.4 H583.2"/><path d="M584.8 383 L583.2 384.4 L584.8 385.8"/><path d="M594.4 370.3 Q596.3 370.9 595.9 372.8 L592.6 387 Q592 389.1 589.8 389.1 H581.2 Q578.8 389.1 579.3 386.8 L582.6 372.8 Q583.2 370.2 585.8 370.2 H588.4"/><path d="M586.8 368.8 L588.4 370.2 L586.8 371.6"/></g>
<path d="M1290.8 157.1 H1295.8 L1299.3 160.7 V168.9 A1.3 1.3 0 0 1 1298 170.2 H1290.8 A1.3 1.3 0 0 1 1289.5 168.9 V158.4 A1.3 1.3 0 0 1 1290.8 157.1 Z" fill="#6741b5"/><g fill="#a58ad8"><rect x="1291.6" y="164" width="5.6" height="1"/><rect x="1291.6" y="166.2" width="5.6" height="1"/></g>
<g fill="none" stroke="#3b73ea" stroke-width="1.2" stroke-linecap="round" stroke-linejoin="round"><path d="M1545.8 162.6 A4.2 4.2 0 0 1 1553.6 161.6"/><path d="M1554.3 165.4 A4.2 4.2 0 0 1 1546.5 166.4"/><path d="M1545.6 159.6 V162.9 H1548.6"/><path d="M1554.5 168.4 V165.1 H1551.5"/></g>
<polyline points="1293.1,191.8 1297.4,195.8 1293.1,199.8" fill="none" stroke="#1a1a1a" stroke-width="1.35" stroke-linecap="round" stroke-linejoin="round"/>
<g fill="none" stroke="#3b73ea" stroke-width="1.15" stroke-linejoin="round"><path d="M1502.6 198.9 H1501.8 A1.2 1.2 0 0 1 1500.6 197.7 V192.4 A1.2 1.2 0 0 1 1501.8 191.2 H1505.9 A1.2 1.2 0 0 1 1507.1 192.4 V193.4"/><rect x="1503.6" y="193.9" width="6.4" height="6.4" rx="1.3"/></g>
<g transform="translate(1462.7,188.7) scale(0.6)" fill="none" stroke="#5a616b" stroke-width="1.95" stroke-linecap="round" stroke-linejoin="round"><path d="M7 7h.01M7 3h5c.512 0 1.024.195 1.414.586l7 7a2 2 0 010 2.828l-7 7a2 2 0 01-2.828 0l-7-7A1.994 1.994 0 013 12V7a4 4 0 014-4z"/></g>
<polyline points="1293.1,227.3 1297.4,231.3 1293.1,235.3" fill="none" stroke="#1a1a1a" stroke-width="1.35" stroke-linecap="round" stroke-linejoin="round"/>
<g fill="none" stroke="#3b73ea" stroke-width="1.15" stroke-linejoin="round"><path d="M1502.6 234.4 H1501.8 A1.2 1.2 0 0 1 1500.6 233.2 V227.9 A1.2 1.2 0 0 1 1501.8 226.7 H1505.9 A1.2 1.2 0 0 1 1507.1 227.9 V228.9"/><rect x="1503.6" y="229.4" width="6.4" height="6.4" rx="1.3"/></g>
<g transform="translate(1462.7,224.2) scale(0.6)" fill="none" stroke="#5a616b" stroke-width="1.95" stroke-linecap="round" stroke-linejoin="round"><path d="M7 7h.01M7 3h5c.512 0 1.024.195 1.414.586l7 7a2 2 0 010 2.828l-7 7a2 2 0 01-2.828 0l-7-7A1.994 1.994 0 013 12V7a4 4 0 014-4z"/></g>
<polyline points="1293.1,262.8 1297.4,266.8 1293.1,270.8" fill="none" stroke="#1a1a1a" stroke-width="1.35" stroke-linecap="round" stroke-linejoin="round"/>
<g fill="none" stroke="#3b73ea" stroke-width="1.15" stroke-linejoin="round"><path d="M1502.6 269.9 H1501.8 A1.2 1.2 0 0 1 1500.6 268.7 V263.4 A1.2 1.2 0 0 1 1501.8 262.2 H1505.9 A1.2 1.2 0 0 1 1507.1 263.4 V264.4"/><rect x="1503.6" y="264.9" width="6.4" height="6.4" rx="1.3"/></g>
<g fill="none" stroke="#3b73ea" stroke-width="1.15"><rect x="1464.8" y="262.6" width="10.4" height="9.6" rx="1.6"/><line x1="1466.8" y1="266.4" x2="1473.2" y2="266.4" stroke-width="1.2"/><line x1="1467.6" y1="261.2" x2="1467.6" y2="263.6"/><line x1="1472.4" y1="261.2" x2="1472.4" y2="263.6"/></g>
<polyline points="1293.1,298.3 1297.4,302.3 1293.1,306.3" fill="none" stroke="#1a1a1a" stroke-width="1.35" stroke-linecap="round" stroke-linejoin="round"/>
<g fill="none" stroke="#3b73ea" stroke-width="1.15" stroke-linejoin="round"><path d="M1502.6 305.4 H1501.8 A1.2 1.2 0 0 1 1500.6 304.2 V298.9 A1.2 1.2 0 0 1 1501.8 297.7 H1505.9 A1.2 1.2 0 0 1 1507.1 298.9 V299.9"/><rect x="1503.6" y="300.4" width="6.4" height="6.4" rx="1.3"/></g>
<g transform="translate(1462.7,295.2) scale(0.6)" fill="none" stroke="#5a616b" stroke-width="1.95" stroke-linecap="round" stroke-linejoin="round"><path d="M7 7h.01M7 3h5c.512 0 1.024.195 1.414.586l7 7a2 2 0 010 2.828l-7 7a2 2 0 01-2.828 0l-7-7A1.994 1.994 0 013 12V7a4 4 0 014-4z"/></g>
<polyline points="1293.1,333.8 1297.4,337.8 1293.1,341.8" fill="none" stroke="#1a1a1a" stroke-width="1.35" stroke-linecap="round" stroke-linejoin="round"/>
<g fill="none" stroke="#3b73ea" stroke-width="1.15" stroke-linejoin="round"><path d="M1502.6 340.9 H1501.8 A1.2 1.2 0 0 1 1500.6 339.7 V334.4 A1.2 1.2 0 0 1 1501.8 333.2 H1505.9 A1.2 1.2 0 0 1 1507.1 334.4 V335.4"/><rect x="1503.6" y="335.9" width="6.4" height="6.4" rx="1.3"/></g>
<g transform="translate(1462.7,330.7) scale(0.6)" fill="none" stroke="#5a616b" stroke-width="1.95" stroke-linecap="round" stroke-linejoin="round"><path d="M7 7h.01M7 3h5c.512 0 1.024.195 1.414.586l7 7a2 2 0 010 2.828l-7 7a2 2 0 01-2.828 0l-7-7A1.994 1.994 0 013 12V7a4 4 0 014-4z"/></g>
<polyline points="1293.1,369.3 1297.4,373.3 1293.1,377.3" fill="none" stroke="#1a1a1a" stroke-width="1.35" stroke-linecap="round" stroke-linejoin="round"/>
<g fill="none" stroke="#3b73ea" stroke-width="1.15" stroke-linejoin="round"><path d="M1502.6 376.4 H1501.8 A1.2 1.2 0 0 1 1500.6 375.2 V369.9 A1.2 1.2 0 0 1 1501.8 368.7 H1505.9 A1.2 1.2 0 0 1 1507.1 369.9 V370.9"/><rect x="1503.6" y="371.4" width="6.4" height="6.4" rx="1.3"/></g>
<g transform="translate(1462.7,366.2) scale(0.6)" fill="none" stroke="#5a616b" stroke-width="1.95" stroke-linecap="round" stroke-linejoin="round"><path d="M7 7h.01M7 3h5c.512 0 1.024.195 1.414.586l7 7a2 2 0 010 2.828l-7 7a2 2 0 01-2.828 0l-7-7A1.994 1.994 0 013 12V7a4 4 0 014-4z"/></g>
<polyline points="1293.1,404.8 1297.4,408.8 1293.1,412.8" fill="none" stroke="#1a1a1a" stroke-width="1.35" stroke-linecap="round" stroke-linejoin="round"/>
<g fill="none" stroke="#3b73ea" stroke-width="1.15" stroke-linejoin="round"><path d="M1502.6 411.9 H1501.8 A1.2 1.2 0 0 1 1500.6 410.7 V405.4 A1.2 1.2 0 0 1 1501.8 404.2 H1505.9 A1.2 1.2 0 0 1 1507.1 405.4 V406.4"/><rect x="1503.6" y="406.9" width="6.4" height="6.4" rx="1.3"/></g>
<g transform="translate(1462.7,401.7) scale(0.6)" fill="none" stroke="#5a616b" stroke-width="1.95" stroke-linecap="round" stroke-linejoin="round"><path d="M7 7h.01M7 3h5c.512 0 1.024.195 1.414.586l7 7a2 2 0 010 2.828l-7 7a2 2 0 01-2.828 0l-7-7A1.994 1.994 0 013 12V7a4 4 0 014-4z"/></g>
<circle cx="1295" cy="454.7" r="5.3" fill="none" stroke="#3b73ea" stroke-width="1.3"/><path d="M1295 452.3 V457.1 M1292.6 454.7 H1297.4" stroke="#3b73ea" stroke-width="1.4" stroke-linecap="round"/>
<g stroke="#4a33c8" fill="none" stroke-width="1.25" stroke-linecap="round"><path d="M1477 459.2 L1484.2 452 A0.9 0.9 0 0 0 1482.9 450.7 L1475.7 457.9 A0.9 0.9 0 0 0 1477 459.2 Z"/><line x1="1481.2" y1="452.4" x2="1482.5" y2="453.7"/></g><g fill="#4a33c8"><circle cx="1477.3" cy="450.6" r="0.6"/><circle cx="1485.2" cy="457.2" r="0.7"/><circle cx="1478.8" cy="449.2" r="0.4"/></g>
<polygon points="1290.50,609.60 1293.26,610.95 1296.16,611.94 1297.15,614.84 1298.50,617.60 1297.15,620.36 1296.16,623.26 1293.26,624.25 1290.50,625.60 1287.74,624.25 1284.84,623.26 1283.85,620.36 1282.50,617.60 1283.85,614.84 1284.84,611.94 1287.74,610.95" fill="none" stroke="#4b5260" stroke-width="1.3" stroke-linejoin="round"/><polyline points="1287.3,617.8 1289.6,620 1293.8,615.6" fill="none" stroke="#4b5260" stroke-width="1.4" stroke-linecap="round" stroke-linejoin="round"/>
<g fill="none" stroke="#4b5260" stroke-width="1.3" stroke-linejoin="round" stroke-linecap="round"><path d="M1285.8 712.5 H1292 L1297.2 717.7 V726.8 A1.6 1.6 0 0 1 1295.6 728.4 H1285.8 A1.6 1.6 0 0 1 1284.2 726.8 V714.1 A1.6 1.6 0 0 1 1285.8 712.5 Z"/><line x1="1287.6" y1="721.4" x2="1293.8" y2="721.4"/><line x1="1287.6" y1="724.6" x2="1293.8" y2="724.6"/></g>
</svg>
<div class="t" style="left:96.50px;top:103.35px;font-size:14px;font-weight:700;font-style:normal;color:#3e4553;letter-spacing:-0.666px;">NDA eSign</div>
<div class="t" style="left:1308.00px;top:104.00px;font-size:13px;font-weight:400;font-style:normal;color:#9ea4ae;letter-spacing:-0.054px;">Auto-Create is off</div>
<div class="t" style="left:1453.00px;top:102.93px;font-size:14.5px;font-weight:700;font-style:normal;color:#ffffff;letter-spacing:-0.554px;">Automate</div>
<div class="t" style="left:89.60px;top:158.14px;font-size:12px;font-weight:700;font-style:normal;color:#141414;letter-spacing:0.022px;">Contract</div>
<div class="t" style="left:106.80px;top:175.62px;font-size:12.5px;font-weight:400;font-style:normal;color:#7a808b;letter-spacing:0.054px;">Change selected file</div>
<div class="t" style="left:102.70px;top:231.90px;font-size:12.4px;font-weight:400;font-style:normal;color:#202124;letter-spacing:-0.423px;">File</div>
<div class="t" style="left:136.00px;top:231.90px;font-size:12.4px;font-weight:400;font-style:normal;color:#202124;letter-spacing:-0.120px;">Edit</div>
<div class="t" style="left:171.40px;top:231.90px;font-size:12.4px;font-weight:400;font-style:normal;color:#202124;letter-spacing:-0.214px;">View</div>
<div class="t" style="left:211.70px;top:231.90px;font-size:12.4px;font-weight:400;font-style:normal;color:#202124;letter-spacing:0.280px;">Insert</div>
<div class="t" style="left:258.40px;top:231.90px;font-size:12.4px;font-weight:400;font-style:normal;color:#202124;letter-spacing:-0.050px;">Format</div>
<div class="t" style="left:312.20px;top:231.90px;font-size:12.4px;font-weight:400;font-style:normal;color:#202124;letter-spacing:0.016px;">Tools</div>
<div class="t" style="left:356.10px;top:231.90px;font-size:12.4px;font-weight:400;font-style:normal;color:#202124;letter-spacing:-0.069px;">Extensions</div>
<div class="t" style="left:430.50px;top:231.90px;font-size:12.4px;font-weight:400;font-style:normal;color:#202124;letter-spacing:-0.161px;">Help</div>
<div class="t" style="left:217.50px;top:266.60px;font-size:13px;font-weight:400;font-style:normal;color:#444746;letter-spacing:-0.683px;">100%</div>
<div class="t" style="left:293.00px;top:266.60px;font-size:13px;font-weight:400;font-style:normal;color:#444746;letter-spacing:-0.067px;">Normal text</div>
<div class="t" style="left:406.40px;top:266.60px;font-size:13px;font-weight:400;font-style:normal;color:#444746;letter-spacing:-0.797px;">DM Sa...</div>
<div class="t" style="left:519.50px;top:267.02px;font-size:12.5px;font-weight:400;font-style:normal;color:#1f1f1f;letter-spacing:0.094px;">12</div>
<div class="t" style="left:366.20px;top:479.84px;font-size:17.2px;font-weight:500;font-style:normal;color:#222222;letter-spacing:-0.123px;-webkit-text-stroke:0.8px #222;">ONE-WAY NON-DISCLOSURE AGREEMENT (NDA)</div>
<div class="t" style="left:366.20px;top:538.92px;font-size:13.8px;font-weight:400;font-style:normal;color:#262626;letter-spacing:0.050px;"><b>THIS AGREEMENT</b> made on <b>01 Feb 2022</b> (the “<b>Effective Date</b>”)</div>
<div class="t" style="left:366.20px;top:556.72px;font-size:13.8px;font-weight:400;font-style:normal;color:#262626;letter-spacing:-0.056px;">BETWEEN <b>Portant, Sydney, Australia</b> (“<b>Discloser</b>”)</div>
<div class="t" style="left:366.20px;top:574.62px;font-size:13.8px;font-weight:400;font-style:normal;color:#262626;letter-spacing:0.176px;">AND <b>{{Company name}}, {{Company Business Number}}, {{Company</b></div>
<div class="t" style="left:366.20px;top:592.52px;font-size:13.8px;font-weight:400;font-style:normal;color:#262626;letter-spacing:0.300px;"><b>address}}</b> (“<b>Recipient</b>”)</div>
<div class="t" style="left:366.20px;top:610.42px;font-size:13.8px;font-weight:400;font-style:normal;color:#262626;letter-spacing:0.247px;">(each a “<b>Party</b>” and together the “<b>Parties</b>”).</div>
<div class="t" style="left:366.20px;top:666.32px;font-size:13.8px;font-weight:400;font-style:normal;color:#262626;letter-spacing:-0.643px;"><b>BACKGROUND</b></div>
<div class="t" style="left:366.20px;top:721.12px;font-size:13.8px;font-weight:400;font-style:normal;color:#262626;letter-spacing:0.338px;">In order to facilitate discussions, meetings and the conduct of business between</div>
<div class="t" style="left:366.20px;top:739.12px;font-size:13.8px;font-weight:400;font-style:normal;color:#262626;letter-spacing:0.340px;">the Parties with respect to the Purpose (as hereinafter defined) it may be</div>
<div class="t" style="left:366.20px;top:757.12px;font-size:13.8px;font-weight:400;font-style:normal;color:#262626;letter-spacing:0.303px;">necessary for the Disclosure to disclose Confidential Information (as hereinafter</div>
<div class="t" style="left:366.20px;top:775.12px;font-size:13.8px;font-weight:400;font-style:normal;color:#262626;letter-spacing:0.290px;">defined) to the Recipient. The Parties have entered into this Agreement to ensure</div>
<div class="t" style="left:366.20px;top:793.12px;font-size:13.8px;font-weight:400;font-style:normal;color:#262626;letter-spacing:0.356px;">that the Confidential Information remains strictly confidential so long as this</div>
<div class="t" style="left:366.20px;top:811.12px;font-size:13.8px;font-weight:400;font-style:normal;color:#262626;letter-spacing:0.299px;">Agreement survives in accordance with its terms. Any Party receiving</div>
<div class="t" style="left:366.20px;top:829.12px;font-size:13.8px;font-weight:400;font-style:normal;color:#262626;letter-spacing:0.306px;">Confidential Information shall receive it on a confidential basis and for a limited</div>
<div class="t" style="left:366.20px;top:847.12px;font-size:13.8px;font-weight:400;font-style:normal;color:#262626;letter-spacing:0.442px;">purpose.</div>
<div class="t" style="left:387.20px;top:406.26px;font-size:13.4px;font-weight:700;font-style:italic;color:#ffffff;letter-spacing:0.363px;">Disclaimer: This contract template has not been tailored to your specific</div>
<div class="t" style="left:390.00px;top:424.26px;font-size:13.4px;font-weight:700;font-style:italic;color:#ffffff;letter-spacing:0.333px;">circumstances. It&nbsp; is advisable to consult with an attorney before use.</div>
<div class="t" style="left:602.00px;top:361.75px;font-size:22.5px;font-weight:700;font-style:normal;color:#cdcdcd;letter-spacing:0.083px;">portant</div>
<div class="t" style="left:1304.60px;top:159.57px;font-size:11.5px;font-weight:400;font-style:normal;color:#3b73ea;letter-spacing:0.260px;text-decoration:underline;text-underline-offset:1.5px;">NDA Request Form</div>
<div class="t" style="left:1305.70px;top:190.54px;font-size:12px;font-weight:700;font-style:normal;color:#161616;letter-spacing:0.033px;">Response Number</div>
<div class="t" style="left:1516.00px;top:190.02px;font-size:11.2px;font-weight:700;font-style:normal;color:#3b73ea;letter-spacing:0.344px;">Copy</div>
<div class="t" style="left:1305.70px;top:226.04px;font-size:12px;font-weight:700;font-style:normal;color:#161616;letter-spacing:-0.006px;">Respondent Email</div>
<div class="t" style="left:1516.00px;top:225.52px;font-size:11.2px;font-weight:700;font-style:normal;color:#3b73ea;letter-spacing:0.344px;">Copy</div>
<div class="t" style="left:1305.70px;top:261.54px;font-size:12px;font-weight:700;font-style:normal;color:#161616;letter-spacing:0.076px;">Date Submitted</div>
<div class="t" style="left:1516.00px;top:261.02px;font-size:11.2px;font-weight:700;font-style:normal;color:#3b73ea;letter-spacing:0.344px;">Copy</div>
<div class="t" style="left:1305.70px;top:297.04px;font-size:12px;font-weight:700;font-style:normal;color:#161616;letter-spacing:0.176px;">Company name</div>
<div class="t" style="left:1516.00px;top:296.52px;font-size:11.2px;font-weight:700;font-style:normal;color:#3b73ea;letter-spacing:0.344px;">Copy</div>
<div class="t" style="left:1305.70px;top:332.54px;font-size:12px;font-weight:700;font-style:normal;color:#161616;letter-spacing:0.068px;">Company address</div>
<div class="t" style="left:1516.00px;top:332.02px;font-size:11.2px;font-weight:700;font-style:normal;color:#3b73ea;letter-spacing:0.344px;">Copy</div>
<div class="t" style="left:1305.70px;top:368.04px;font-size:12px;font-weight:700;font-style:normal;color:#161616;letter-spacing:-0.062px;">Company Business Num...</div>
<div class="t" style="left:1516.00px;top:367.52px;font-size:11.2px;font-weight:700;font-style:normal;color:#3b73ea;letter-spacing:0.344px;">Copy</div>
<div class="t" style="left:1305.70px;top:403.54px;font-size:12px;font-weight:700;font-style:normal;color:#161616;letter-spacing:0.102px;">Employee name</div>
<div class="t" style="left:1516.00px;top:403.02px;font-size:11.2px;font-weight:700;font-style:normal;color:#3b73ea;letter-spacing:0.344px;">Copy</div>
<div class="t" style="left:1305.60px;top:448.24px;font-size:12px;font-weight:700;font-style:normal;color:#3b73ea;letter-spacing:-0.148px;">Add AI Content Field</div>
<div class="t" style="left:1290.60px;top:486.51px;font-size:10.5px;font-weight:400;font-style:normal;color:#4b5563;letter-spacing:0.295px;">Output Name</div>
<div class="t" style="left:1289.70px;top:501.35px;font-size:14px;font-weight:400;font-style:normal;color:#1f2937;letter-spacing:0.225px;">NDA - Portant &amp; {{Company name}}</div>
<div class="t" style="left:1280.30px;top:530.91px;font-size:10.5px;font-weight:400;font-style:normal;color:#9ca3af;letter-spacing:0.235px;">Tags from the source field table can be pasted here</div>
<div class="t" style="left:1322.20px;top:561.54px;font-size:12px;font-weight:700;font-style:normal;color:#151515;letter-spacing:-0.159px;">Create PDF copy</div>
<div class="t" style="left:1305.00px;top:609.75px;font-size:14px;font-weight:700;font-style:normal;color:#3a4150;letter-spacing:-0.354px;">Request a Signature</div>
<div class="t" style="left:1280.50px;top:631.69px;font-size:11px;font-weight:400;font-style:normal;color:#a0a6b0;letter-spacing:0.095px;">Add recipients to sign document</div>
<div class="t" style="left:1305.00px;top:713.15px;font-size:14px;font-weight:700;font-style:normal;color:#3a4150;letter-spacing:-0.244px;">Add another document</div>
<div class="t" style="left:1280.50px;top:734.69px;font-size:11px;font-weight:400;font-style:normal;color:#a0a6b0;letter-spacing:0.127px;">Create multiple documents the same workflow</div>
<div class="t" style="left:1490.00px;top:449.17px;font-size:11.5px;font-weight:700;font-style:normal;color:#4a33c8;letter-spacing:0.058px;">Portant</div>
<div class="t" style="font-family:'Liberation Mono', monospace;left:1535.00px;top:448.67px;font-size:12.2px;font-weight:700;font-style:normal;color:#4a33c8;letter-spacing:-0.741px;">AI</div>
<div class="t" style="left:1339.60px;top:661.31px;font-size:10.5px;font-weight:700;font-style:normal;color:#3b73ea;letter-spacing:-0.711px;">Add</div>
<div class="t" style="left:1339.60px;top:764.41px;font-size:10.5px;font-weight:700;font-style:normal;color:#3b73ea;letter-spacing:-0.711px;">Add</div>
</div></div>
</body></html>
